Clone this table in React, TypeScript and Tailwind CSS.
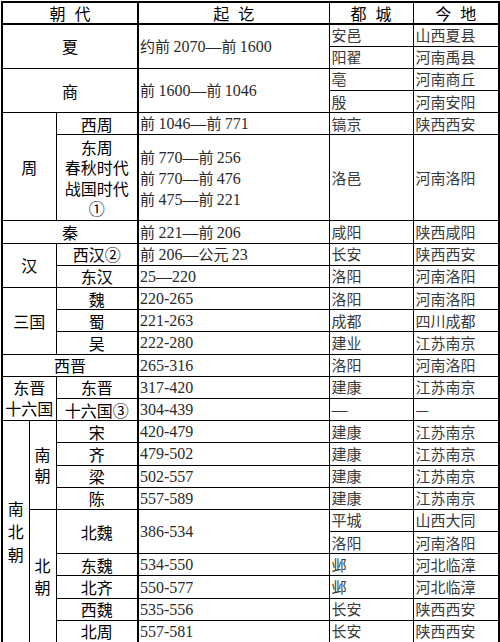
import React from 'react';

const cjk = '"Noto Sans CJK SC", sans-serif';
const serif = '"Liberation Serif", "Noto Sans CJK SC", serif';

// wrap digit runs so they get the Times-like serif
const mix = (text: string) =>
    text.split(/([0-9][0-9\-—]*[0-9]|—)/).map((part, i) =>
        /[0-9—]/.test(part) ? (
            <span key={i} className="text-[16px] leading-[18px]" style={{ fontFamily: serif }}>{part}</span>
        ) : (
            <span key={i}>{part}</span>
        )
    );

const td = 'border border-black p-0 align-middle overflow-hidden';
const label = `${td} text-center text-[16px] text-black leading-[18px]`;
const data = `${td} text-left pl-[2px] text-[15px] text-[#3a3a3a] leading-[18px] whitespace-nowrap`;
const date = `${td} border-l-2 text-left pl-[1px] text-[15px] text-[#2a2a2a] leading-[18px] whitespace-nowrap`;

const Gap = () => <span className="inline-block w-[9px]" />;

const Place = ({ a, b }: { a: string; b: string }) => (
    <>
        <td className={data}>{mix(a)}</td>
        <td className={data}>{b}</td>
    </>
);

export default function App() {
    const r = 'h-[22.2px]';
    return (
        <div className="w-[500px] h-[642px] bg-white p-[1px]" style={{ fontFamily: cjk }}>
            <table className="w-[497px] table-fixed border-collapse border-2 border-black">
                <colgroup>
                    <col className="w-[27px]" />
                    <col className="w-[27px]" />
                    <col className="w-[82px]" />
                    <col className="w-[191px]" />
                    <col className="w-[84px]" />
                    <col className="w-[86px]" />
                </colgroup>
                <tbody>
                    <tr className="h-[22px]">
                        <td colSpan={3} className={`${label} border-b-2`}>朝<Gap />代</td>
                        <td className={`${label} border-b-2 border-l-2`}>起<Gap />讫</td>
                        <td className={`${label} border-b-2`}>都<Gap />城</td>
                        <td className={`${label} border-b-2`}>今<Gap />地</td>
                    </tr>

                    <tr className={r}>
                        <td colSpan={3} rowSpan={2} className={label}>夏</td>
                        <td rowSpan={2} className={date}>{mix('约前 2070—前 1600')}</td>
                        <Place a="安邑" b="山西夏县" />
                    </tr>
                    <tr className={r}>
                        <Place a="阳翟" b="河南禹县" />
                    </tr>

                    <tr className={r}>
                        <td colSpan={3} rowSpan={2} className={label}>商</td>
                        <td rowSpan={2} className={date}>{mix('前 1600—前 1046')}</td>
                        <Place a="亳" b="河南商丘" />
                    </tr>
                    <tr className={r}>
                        <Place a="殷" b="河南安阳" />
                    </tr>

                    <tr className={r}>
                        <td colSpan={2} rowSpan={2} className={label}>周</td>
                        <td className={label}>西周</td>
                        <td className={date}>{mix('前 1046—前 771')}</td>
                        <Place a="镐京" b="陕西西安" />
                    </tr>
                    <tr className="h-[86px]">
                        <td className={`${label} leading-[20.5px]`}>
                            东周<br />春秋时代<br />战国时代<br />①
                        </td>
                        <td className={`${date} leading-[21px]`}>
                            {mix('前 770—前 256')}<br />
                            {mix('前 770—前 476')}<br />
                            {mix('前 475—前 221')}
                        </td>
                        <td className={data}>洛邑</td>
                        <td className={data}>河南洛阳</td>
                    </tr>

                    <tr className={r}>
                        <td colSpan={3} className={label}>秦</td>
                        <td className={date}>{mix('前 221—前 206')}</td>
                        <Place a="咸阳" b="陕西咸阳" />
                    </tr>

                    <tr className={r}>
                        <td colSpan={2} rowSpan={2} className={label}>汉</td>
                        <td className={label}>西汉②</td>
                        <td className={date}>{mix('前 206—公元 23')}</td>
                        <Place a="长安" b="陕西西安" />
                    </tr>
                    <tr className={r}>
                        <td className={label}>东汉</td>
                        <td className={date}>{mix('25—220')}</td>
                        <Place a="洛阳" b="河南洛阳" />
                    </tr>

                    <tr className={r}>
                        <td colSpan={2} rowSpan={3} className={label}>三国</td>
                        <td className={label}>魏</td>
                        <td className={date}>{mix('220-265')}</td>
                        <Place a="洛阳" b="河南洛阳" />
                    </tr>
                    <tr className={r}>
                        <td className={label}>蜀</td>
                        <td className={date}>{mix('221-263')}</td>
                        <Place a="成都" b="四川成都" />
                    </tr>
                    <tr className={r}>
                        <td className={label}>吴</td>
                        <td className={date}>{mix('222-280')}</td>
                        <Place a="建业" b="江苏南京" />
                    </tr>

                    <tr className={r}>
                        <td colSpan={3} className={label}>西晋</td>
                        <td className={date}>{mix('265-316')}</td>
                        <Place a="洛阳" b="河南洛阳" />
                    </tr>

                    <tr className={r}>
                        <td colSpan={2} rowSpan={2} className={`${label} leading-[21px]`}>
                            东晋<br />十六国
                        </td>
                        <td className={label}>东晋</td>
                        <td className={date}>{mix('317-420')}</td>
                        <Place a="建康" b="江苏南京" />
                    </tr>
                    <tr className={r}>
                        <td className={label}>十六国③</td>
                        <td className={date}>{mix('304-439')}</td>
                        <Place a="—" b="—" />
                    </tr>

                    <tr className={r}>
                        <td rowSpan={10} className={`${label} leading-[23px]`}>南<br />北<br />朝</td>
                        <td rowSpan={4} className={`${label} leading-[21px]`}>南<br />朝</td>
                        <td className={label}>宋</td>
                        <td className={date}>{mix('420-479')}</td>
                        <Place a="建康" b="江苏南京" />
                    </tr>
                    <tr className={r}>
                        <td className={label}>齐</td>
                        <td className={date}>{mix('479-502')}</td>
                        <Place a="建康" b="江苏南京" />
                    </tr>
                    <tr className={r}>
                        <td className={label}>梁</td>
                        <td className={date}>{mix('502-557')}</td>
                        <Place a="建康" b="江苏南京" />
                    </tr>
                    <tr className={r}>
                        <td className={label}>陈</td>
                        <td className={date}>{mix('557-589')}</td>
                        <Place a="建康" b="江苏南京" />
                    </tr>

                    <tr className={r}>
                        <td rowSpan={6} className={`${label} leading-[22px]`}>北<br />朝</td>
                        <td rowSpan={2} className={label}>北魏</td>
                        <td rowSpan={2} className={date}>{mix('386-534')}</td>
                        <Place a="平城" b="山西大同" />
                    </tr>
                    <tr className={r}>
                        <Place a="洛阳" b="河南洛阳" />
                    </tr>
                    <tr className={r}>
                        <td className={label}>东魏</td>
                        <td className={date}>{mix('534-550')}</td>
                        <Place a="邺" b="河北临漳" />
                    </tr>
                    <tr className={r}>
                        <td className={label}>北齐</td>
                        <td className={date}>{mix('550-577')}</td>
                        <Place a="邺" b="河北临漳" />
                    </tr>
                    <tr className={r}>
                        <td className={label}>西魏</td>
                        <td className={date}>{mix('535-556')}</td>
                        <Place a="长安" b="陕西西安" />
                    </tr>
                    <tr className={r}>
                        <td className={label}>北周</td>
                        <td className={date}>{mix('557-581')}</td>
                        <Place a="长安" b="陕西西安" />
                    </tr>
                </tbody>
            </table>
        </div>
    );
}
